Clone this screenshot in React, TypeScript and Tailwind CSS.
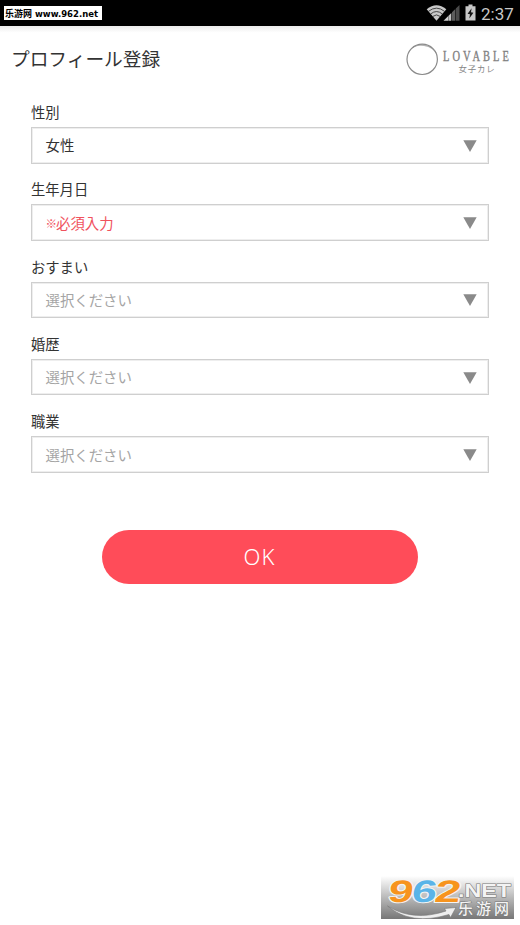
import { clsx } from "clsx";

type FieldTone = "filled" | "required" | "placeholder";

interface ProfileField {
	id: string;
	label: string;
	value: string;
	tone: FieldTone;
}

const FIELDS: ProfileField[] = [
	{ id: "gender", label: "性別", value: "女性", tone: "filled" },
	{ id: "birthday", label: "生年月日", value: "必須入力", tone: "required" },
	{ id: "area", label: "おすまい", value: "選択ください", tone: "placeholder" },
	{ id: "marriage", label: "婚歴", value: "選択ください", tone: "placeholder" },
	{ id: "job", label: "職業", value: "選択ください", tone: "placeholder" },
];

function StatusBar() {
	return (
		<div className="flex h-[26px] items-center justify-between bg-black pr-[6px] pl-1">
			<svg className="mb-px h-[14px] w-[98px] bg-white" viewBox="0 0 98 14">
				<text
					className="font-['Noto_Sans_CJK_SC',sans-serif]"
					fontSize="9.5"
					fontWeight="700"
					lengthAdjust="spacingAndGlyphs"
					textLength="27"
					x="1"
					y="11"
				>
					乐游网
				</text>
				<text
					className="font-['DejaVu_Sans',sans-serif]"
					fontSize="9"
					fontWeight="700"
					lengthAdjust="spacingAndGlyphs"
					textLength="63"
					x="31"
					y="10.5"
				>
					www.962.net
				</text>
			</svg>
			<div className="flex items-center">
				<WifiIcon />
				<SignalIcon />
				<BatteryIcon />
				<span className="ml-[5px] w-[33px] pt-px font-['Roboto',sans-serif] text-[17px] leading-6 text-[#c8c8c8]">
					2:37
				</span>
			</div>
		</div>
	);
}

function WifiIcon() {
	return (
		<svg className="h-4 w-[21px]" fill="none" viewBox="0 0 20 16">
			<path d="M0.2 4.3Q10 -3.9 19.8 4.3L10 15.8Z" fill="#c8c8c8" />
			<g stroke="#222" strokeWidth="0.8">
				<path d="M2 6.3Q10 0 18 6.3" />
				<path d="M4.2 8.9Q10 4.2 15.8 8.9" />
				<path d="M6.4 11.4Q10 8.4 13.6 11.4" />
			</g>
		</svg>
	);
}

function SignalIcon() {
	return (
		<svg className="-ml-[4px] h-4 w-[17px]" viewBox="0 0 17 16">
			<path d="M0.5 15.7L5 11.2V15.7Z" fill="#d0d0d0" />
			<path d="M5.3 10.9L8.3 7.9V15.7H5.3Z" fill="#c0c0c0" />
			<path d="M9 7.3L12.3 4V15.7H9Z" fill="#5c5c5c" />
			<path d="M12.8 3.5L16.5 0V15.7H12.8Z" fill="#4a4a4a" />
		</svg>
	);
}

function BatteryIcon() {
	return (
		<svg className="mb-0.5 ml-[5px] h-[17px] w-[11px]" viewBox="0 0 11 17">
			<path d="M3.5 0.5H7.5V2.3H10.5V16.5H0.5V2.3H3.5Z" fill="#c8c8c8" />
			<path d="M6.6 4.2L2.6 9.7L5 10.2L4.3 14.5L8.4 8.8L6 8.2Z" fill="#151515" />
		</svg>
	);
}

function Brand() {
	return (
		<svg
			aria-label="LOVABLE 女子カレ"
			className="h-[34px] w-[106px]"
			fill="none"
			viewBox="405 42 106 34"
		>
			<circle cx="422.2" cy="59.3" r="15.2" stroke="#8b8b8b" strokeWidth="1.2" />
			<path
				d="M409 50.5Q418 41 429 46Q436 49 437.8 56Q433 47 424 46Q416 44.5 409 50.5Z"
				fill="#8b8b8b"
				opacity="0.65"
			/>
			<text
				className="font-['Liberation_Serif',serif]"
				fill="#808080"
				fontSize="14.5"
				letterSpacing="4.3"
				stroke="#808080"
				strokeWidth="0.35"
				transform="translate(443 61.2) scale(.72 1)"
			>
				LOVABLE
			</text>
			<text
				className="font-['Noto_Sans_CJK_JP',sans-serif]"
				fill="#858585"
				fontSize="8.4"
				textLength="36"
				x="458.5"
				y="72"
			>
				女子カレ
			</text>
		</svg>
	);
}

function SelectField({ field }: { field: ProfileField }) {
	return (
		<div>
			<label
				className="block h-[29px] text-[14.3px] leading-[28px] text-[#333]"
				htmlFor={field.id}
			>
				{field.label}
			</label>
			<button
				className={clsx(
					"flex h-[36.5px] w-full items-center justify-between border border-[#cfcfcf] bg-white pr-[11px] pl-[13.5px] text-[14.4px] inset-shadow-[0_0_0_1px_#eee]",
					field.tone === "filled" && "text-[#333]",
					field.tone === "required" && "text-[#f0525d]",
					field.tone === "placeholder" && "text-[#a5a5a5]",
				)}
				id={field.id}
				type="button"
			>
				<span className="flex items-center">
					{field.tone === "required" && (
						<span className="w-[10.5px] text-[11.5px] leading-4">※</span>
					)}
					{field.value}
				</span>
				<svg className="mt-px h-3 w-[14px]" viewBox="0 0 14 12">
					<path d="M0.3 0.3H13.7L7 12Z" fill="#8a8a8a" />
				</svg>
			</button>
		</div>
	);
}

/** Site badge pinned to the bottom right corner */
function SiteBadge() {
	return (
		<svg
			className="absolute top-[876px] left-[381px] h-[43px] w-[133px]"
			viewBox="381 876 133 43"
		>
			<defs>
				<linearGradient id="badge" x1="0" x2="0" y1="0" y2="1">
					<stop offset="0" stopColor="#fff" />
					<stop offset="0.5" stopColor="#b9b9b9" />
					<stop offset="1" stopColor="#777" />
				</linearGradient>
			</defs>
			<rect fill="url(#badge)" height="43" width="133" x="381" y="876" />
			<g
				className="font-['Liberation_Sans',sans-serif]"
				fontSize="31"
				fontWeight="700"
				paintOrder="stroke"
				stroke="#f4f4f4"
				strokeLinejoin="round"
				strokeWidth="2"
				transform="translate(388 901.8) skewX(-9)"
			>
				<text fill="#f7941e" lengthAdjust="spacingAndGlyphs" textLength="25" x="-1" y="0">
					9
				</text>
				<text fill="#5ab4e8" lengthAdjust="spacingAndGlyphs" textLength="25" x="22.5" y="0">
					6
				</text>
				<text fill="#f7941e" lengthAdjust="spacingAndGlyphs" textLength="26" x="45.5" y="0">
					2
				</text>
			</g>
			<path
				d="M387.5 906Q413 922 446 911L444.5 908.5L456 907.5L450.5 917.5L449 914.5Q411 926 387.5 906Z"
				fill="#eee"
				stroke="#777"
				strokeWidth="0.6"
			/>
			<g fill="#f3f3f3" paintOrder="stroke" stroke="#777" strokeWidth="1">
				<text
					className="font-['Liberation_Sans',sans-serif]"
					fontSize="19"
					fontWeight="700"
					lengthAdjust="spacingAndGlyphs"
					textLength="53"
					x="458"
					y="896.5"
				>
					.NET
				</text>
				<text
					className="font-['Noto_Sans_CJK_SC',sans-serif]"
					fontSize="15"
					fontWeight="500"
					textLength="51"
					x="458"
					y="914"
				>
					乐游网
				</text>
			</g>
		</svg>
	);
}

export default function App() {
	return (
		<div className="relative h-[925px] w-[520px] overflow-hidden bg-white font-['Noto_Sans_CJK_JP',sans-serif]">
			<StatusBar />
			<header className="flex h-[67px] items-start justify-between bg-linear-to-b from-[#ececec] via-white via-10% to-white pr-[9px] pl-[11px]">
				<h1 className="pt-[17px] text-[18.7px] leading-[30px] text-[#333]">
					プロフィール登録
				</h1>
				<div className="pt-4">
					<Brand />
				</div>
			</header>
			<main className="px-[31px] pt-[5px]">
				<div className="flex flex-col gap-[11.8px]">
					{FIELDS.map((field) => (
						<SelectField field={field} key={field.id} />
					))}
				</div>
				<button
					className="mx-auto mt-[57px] flex h-[54px] w-[316px] items-center justify-center rounded-full bg-[#ff4c59] pr-px font-['Noto_Sans',sans-serif] text-[22px] font-light tracking-[1px] text-white"
					type="button"
				>
					OK
				</button>
			</main>
			<SiteBadge />
		</div>
	);
}
